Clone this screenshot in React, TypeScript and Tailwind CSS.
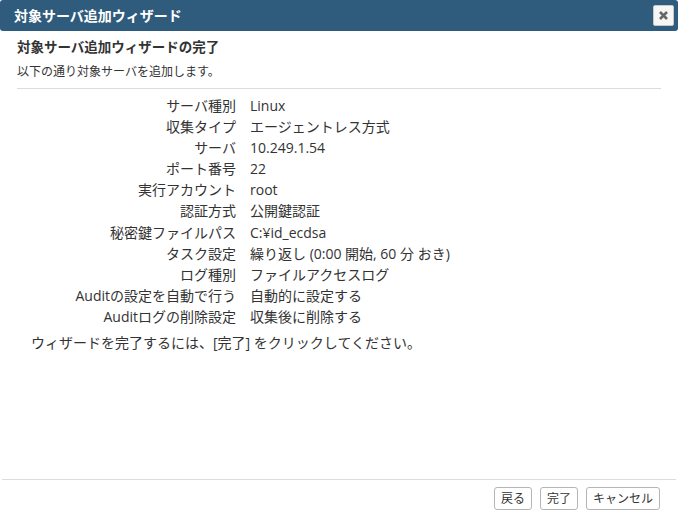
import React from 'react';

const font = { fontFamily: '"Open Sans", "Noto Sans CJK JP", "Liberation Sans", sans-serif' };

const rows: [string, string][] = [
  ['サーバ種別', 'Linux'],
  ['収集タイプ', 'エージェントレス方式'],
  ['サーバ', '10.249.1.54'],
  ['ポート番号', '22'],
  ['実行アカウント', 'root'],
  ['認証方式', '公開鍵認証'],
  ['秘密鍵ファイルパス', 'C:¥id_ecdsa'],
  ['タスク設定', '繰り返し (0:00 開始, 60 分 おき)'],
  ['ログ種別', 'ファイルアクセスログ'],
  ['Auditの設定を自動で行う', '自動的に設定する'],
  ['Auditログの削除設定', '収集後に削除する'],
];

const FooterButton = ({ children }: { children: React.ReactNode }) => (
  <button className="h-[23px] px-[6px] border border-[#b5b5b5] rounded-[3px] bg-white text-[12px] leading-none text-[#333]">
    {children}
  </button>
);

export default function App() {
  return (
    <div className="w-[678px] h-[520px] bg-white flex flex-col text-[#333]" style={font}>
      <div className="h-[31px] shrink-0 bg-[#2f5b7d] rounded-[3px] flex items-center justify-between pl-[14px] pr-[4px]">
        <span className="text-white font-bold text-[14px] leading-none">対象サーバ追加ウィザード</span>
        <button className="w-[21px] h-[21px] bg-[#f6f6f6] border border-[#c8c8c8] rounded-[2px] flex items-center justify-center">
          <svg width="11" height="11" viewBox="0 0 11 11">
            <path d="M2 2 L9 9 M9 2 L2 9" stroke="#666" strokeWidth="2.6" strokeLinecap="butt" />
          </svg>
        </button>
      </div>

      <div className="flex-1 flex flex-col px-[17px]">
        <h2 className="mt-[6px] text-[13.5px] font-bold leading-[20px] text-[#333]">対象サーバ追加ウィザードの完了</h2>
        <p className="mt-[7px] text-[12px] leading-[16px]">以下の通り対象サーバを追加します。</p>
        <div className="mt-[8px] h-px bg-[#dcdcdc] w-[644px]" />

        <div className="mt-[6px] grid grid-cols-[219px_1fr] gap-x-[14px] text-[14px] leading-[21.1px]">
          {rows.map(([label, value]) => (
            <React.Fragment key={label}>
              <div className="text-right whitespace-nowrap">{label}</div>
              <div className="whitespace-nowrap">{value}</div>
            </React.Fragment>
          ))}
        </div>

        <p className="mt-[5px] pl-[14px] text-[14px] leading-[21px]">ウィザードを完了するには、[完了] をクリックしてください。</p>
      </div>

      <div className="h-px bg-[#dcdcdc] mx-[2px]" />
      <div className="h-[40px] shrink-0 flex items-start justify-end gap-[8px] pt-[7px] pr-[18px]">
        <FooterButton>戻る</FooterButton>
        <FooterButton>完了</FooterButton>
        <FooterButton>キャンセル</FooterButton>
      </div>
    </div>
  );
}
